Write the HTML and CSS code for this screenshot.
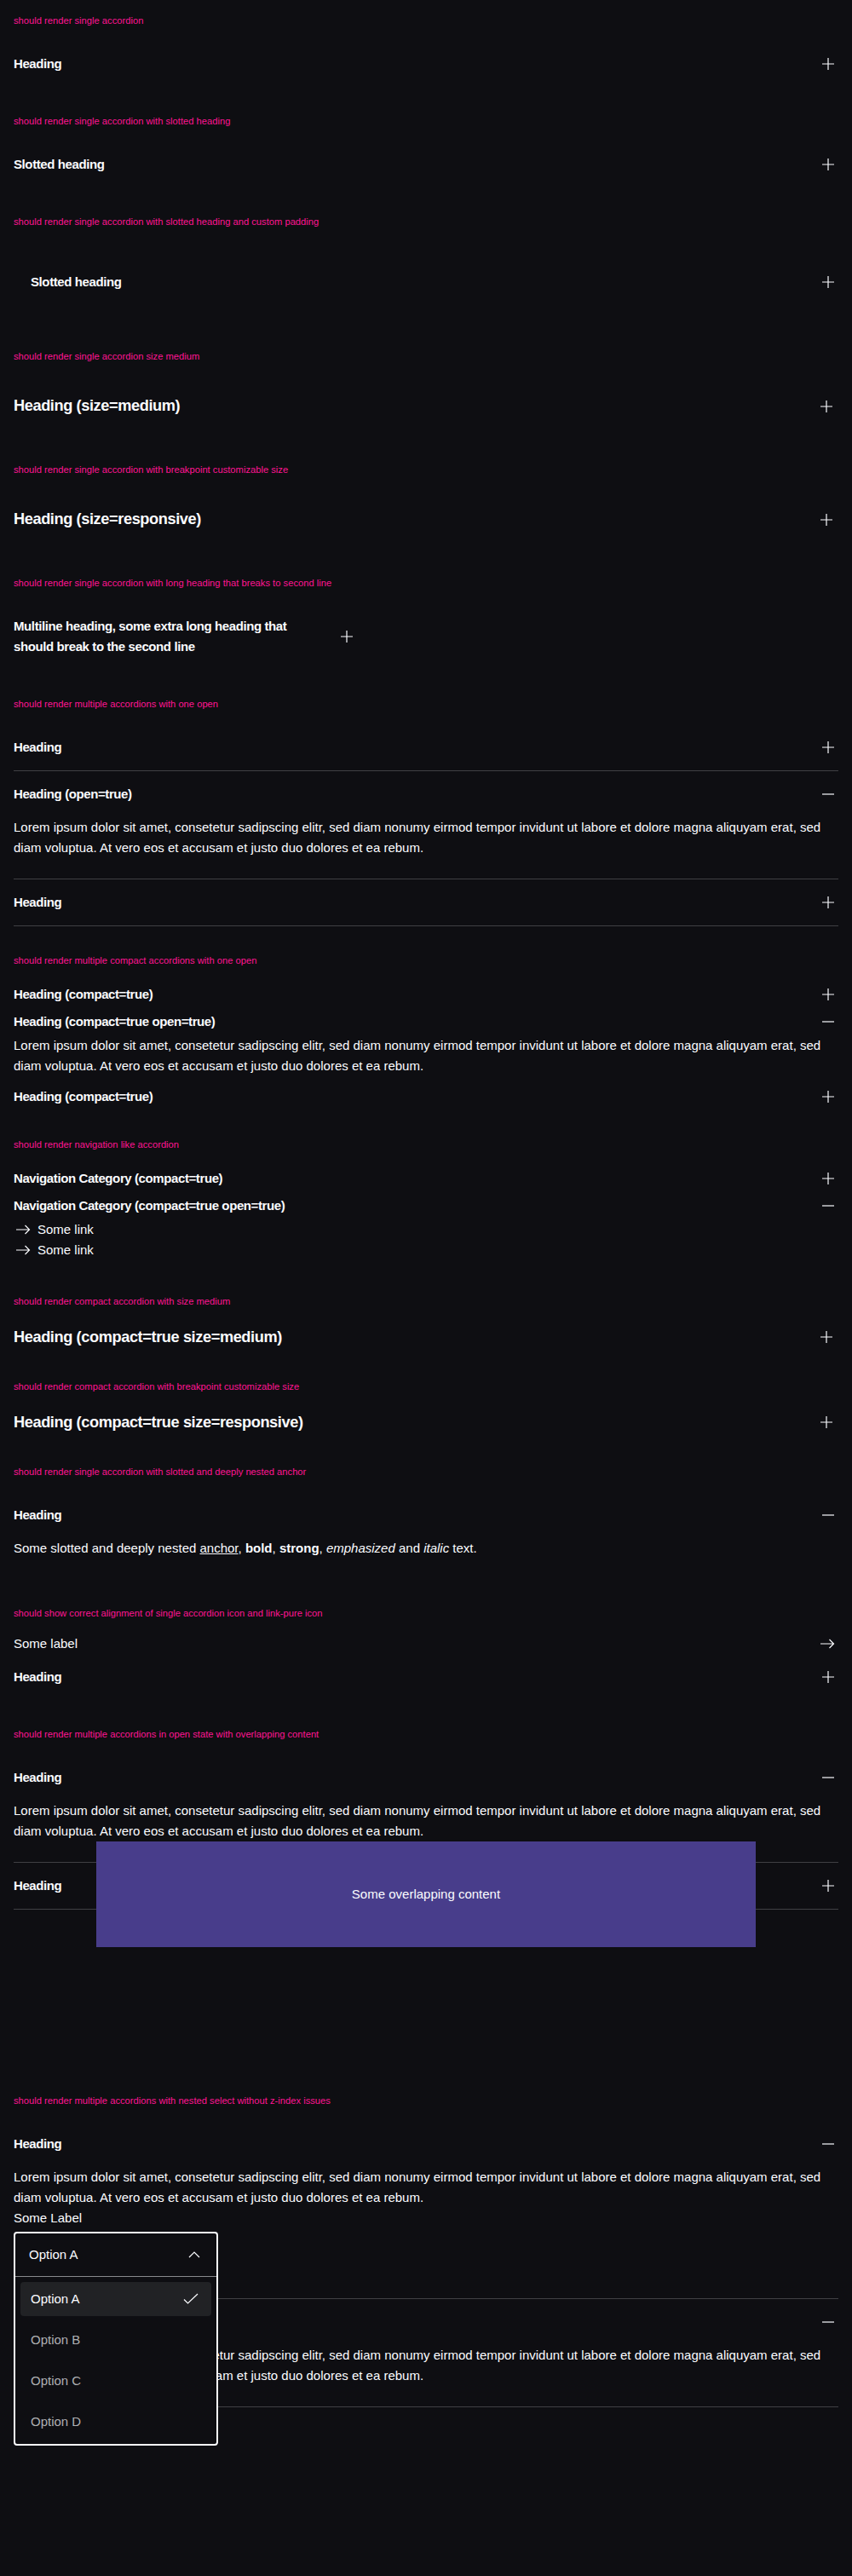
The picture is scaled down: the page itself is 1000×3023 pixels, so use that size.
FILE: index.html
```html
<!DOCTYPE html>
<html lang="en">
<head>
<meta charset="utf-8">
<title>Accordion</title>
<link rel="stylesheet" href="styles.css">
</head>
<body>

<section class="playground">
  <p class="label">should render single accordion</p>
  <div class="acc">
    <div class="acc-head"><h2 class="acc-title">Heading</h2><svg class="ico" viewBox="0 0 24 24" aria-hidden="true"><path d="M12 5v14M5 12h14"/></svg></div>
  </div>
</section>

<section class="playground">
  <p class="label">should render single accordion with slotted heading</p>
  <div class="acc">
    <div class="acc-head"><h2 class="acc-title">Slotted heading</h2><svg class="ico" viewBox="0 0 24 24" aria-hidden="true"><path d="M12 5v14M5 12h14"/></svg></div>
  </div>
</section>

<section class="playground">
  <p class="label">should render single accordion with slotted heading and custom padding</p>
  <div class="acc">
    <div class="acc-head"><h2 class="acc-title padded">Slotted heading</h2><svg class="ico" viewBox="0 0 24 24" aria-hidden="true"><path d="M12 5v14M5 12h14"/></svg></div>
  </div>
</section>

<section class="playground">
  <p class="label">should render single accordion size medium</p>
  <div class="acc medium">
    <div class="acc-head"><h2 class="acc-title">Heading (size=medium)</h2><svg class="ico" viewBox="-2 -2 28 28" aria-hidden="true"><path d="M12 5v14M5 12h14"/></svg></div>
  </div>
</section>

<section class="playground">
  <p class="label">should render single accordion with breakpoint customizable size</p>
  <div class="acc medium">
    <div class="acc-head"><h2 class="acc-title">Heading (size=responsive)</h2><svg class="ico" viewBox="-2 -2 28 28" aria-hidden="true"><path d="M12 5v14M5 12h14"/></svg></div>
  </div>
</section>

<section class="playground">
  <p class="label">should render single accordion with long heading that breaks to second line</p>
  <div class="acc narrow">
    <div class="acc-head"><h2 class="acc-title">Multiline heading, some extra long heading that should break to the second line</h2><svg class="ico" viewBox="0 0 24 24" aria-hidden="true"><path d="M12 5v14M5 12h14"/></svg></div>
  </div>
</section>

<section class="playground">
  <p class="label">should render multiple accordions with one open</p>
  <div class="acc bordered">
    <div class="acc-head"><h2 class="acc-title">Heading</h2><svg class="ico" viewBox="0 0 24 24" aria-hidden="true"><path d="M12 5v14M5 12h14"/></svg></div>
  </div>
  <div class="acc bordered">
    <div class="acc-head"><h2 class="acc-title">Heading (open=true)</h2><svg class="ico" viewBox="0 0 24 24" aria-hidden="true"><path d="M5 12h14"/></svg></div>
    <div class="acc-body"><p>Lorem ipsum dolor sit amet, consetetur sadipscing elitr, sed diam nonumy eirmod tempor invidunt ut labore et dolore magna aliquyam erat, sed diam voluptua. At vero eos et accusam et justo duo dolores et ea rebum.</p></div>
  </div>
  <div class="acc bordered">
    <div class="acc-head"><h2 class="acc-title">Heading</h2><svg class="ico" viewBox="0 0 24 24" aria-hidden="true"><path d="M12 5v14M5 12h14"/></svg></div>
  </div>
</section>

<section class="playground">
  <p class="label">should render multiple compact accordions with one open</p>
  <div class="acc compact">
    <div class="acc-head"><h2 class="acc-title">Heading (compact=true)</h2><svg class="ico" viewBox="0 0 24 24" aria-hidden="true"><path d="M12 5v14M5 12h14"/></svg></div>
  </div>
  <div class="acc compact">
    <div class="acc-head"><h2 class="acc-title">Heading (compact=true open=true)</h2><svg class="ico" viewBox="0 0 24 24" aria-hidden="true"><path d="M5 12h14"/></svg></div>
    <div class="acc-body"><p>Lorem ipsum dolor sit amet, consetetur sadipscing elitr, sed diam nonumy eirmod tempor invidunt ut labore et dolore magna aliquyam erat, sed diam voluptua. At vero eos et accusam et justo duo dolores et ea rebum.</p></div>
  </div>
  <div class="acc compact">
    <div class="acc-head"><h2 class="acc-title">Heading (compact=true)</h2><svg class="ico" viewBox="0 0 24 24" aria-hidden="true"><path d="M12 5v14M5 12h14"/></svg></div>
  </div>
</section>

<section class="playground">
  <p class="label">should render navigation like accordion</p>
  <div class="acc compact">
    <div class="acc-head"><h2 class="acc-title">Navigation Category (compact=true)</h2><svg class="ico" viewBox="0 0 24 24" aria-hidden="true"><path d="M12 5v14M5 12h14"/></svg></div>
  </div>
  <div class="acc compact">
    <div class="acc-head"><h2 class="acc-title">Navigation Category (compact=true open=true)</h2><svg class="ico" viewBox="0 0 24 24" aria-hidden="true"><path d="M5 12h14"/></svg></div>
    <div class="acc-body">
      <a class="link" href="#"><svg class="ico" viewBox="0 0 24 24" aria-hidden="true"><path d="M3 12h15.5M13.5 7l5 5-5 5"/></svg>Some link</a>
      <a class="link" href="#"><svg class="ico" viewBox="0 0 24 24" aria-hidden="true"><path d="M3 12h15.5M13.5 7l5 5-5 5"/></svg>Some link</a>
    </div>
  </div>
</section>

<section class="playground">
  <p class="label">should render compact accordion with size medium</p>
  <div class="acc compact medium">
    <div class="acc-head"><h2 class="acc-title">Heading (compact=true size=medium)</h2><svg class="ico" viewBox="-2 -2 28 28" aria-hidden="true"><path d="M12 5v14M5 12h14"/></svg></div>
  </div>
</section>

<section class="playground">
  <p class="label">should render compact accordion with breakpoint customizable size</p>
  <div class="acc compact medium">
    <div class="acc-head"><h2 class="acc-title">Heading (compact=true size=responsive)</h2><svg class="ico" viewBox="-2 -2 28 28" aria-hidden="true"><path d="M12 5v14M5 12h14"/></svg></div>
  </div>
</section>

<section class="playground">
  <p class="label">should render single accordion with slotted and deeply nested anchor</p>
  <div class="acc">
    <div class="acc-head"><h2 class="acc-title">Heading</h2><svg class="ico" viewBox="0 0 24 24" aria-hidden="true"><path d="M5 12h14"/></svg></div>
    <div class="acc-body"><p>Some slotted and deeply nested <a class="anchor" href="#">anchor</a>, <b>bold</b>, <strong>strong</strong>, <em>emphasized</em> and <i>italic</i> text.</p></div>
  </div>
</section>

<section class="playground">
  <p class="label">should show correct alignment of single accordion icon and link-pure icon</p>
  <a class="link stretch" href="#">Some label<svg class="ico" viewBox="0 0 24 24" aria-hidden="true"><path d="M3 12h15.5M13.5 7l5 5-5 5"/></svg></a>
  <div class="acc">
    <div class="acc-head"><h2 class="acc-title">Heading</h2><svg class="ico" viewBox="0 0 24 24" aria-hidden="true"><path d="M12 5v14M5 12h14"/></svg></div>
  </div>
</section>

<section class="playground">
  <p class="label">should render multiple accordions in open state with overlapping content</p>
  <div class="overlap-wrap">
    <div class="acc bordered">
      <div class="acc-head"><h2 class="acc-title">Heading</h2><svg class="ico" viewBox="0 0 24 24" aria-hidden="true"><path d="M5 12h14"/></svg></div>
      <div class="acc-body"><p>Lorem ipsum dolor sit amet, consetetur sadipscing elitr, sed diam nonumy eirmod tempor invidunt ut labore et dolore magna aliquyam erat, sed diam voluptua. At vero eos et accusam et justo duo dolores et ea rebum.</p></div>
    </div>
    <div class="acc bordered">
      <div class="acc-head"><h2 class="acc-title">Heading</h2><svg class="ico" viewBox="0 0 24 24" aria-hidden="true"><path d="M12 5v14M5 12h14"/></svg></div>
    </div>
    <div class="overlap-box">Some overlapping content</div>
  </div>
</section>

<section class="playground">
  <p class="label">should render multiple accordions with nested select without z-index issues</p>
  <div class="acc bordered">
    <div class="acc-head"><h2 class="acc-title">Heading</h2><svg class="ico" viewBox="0 0 24 24" aria-hidden="true"><path d="M5 12h14"/></svg></div>
    <div class="acc-body">
      <p>Lorem ipsum dolor sit amet, consetetur sadipscing elitr, sed diam nonumy eirmod tempor invidunt ut labore et dolore magna aliquyam erat, sed diam voluptua. At vero eos et accusam et justo duo dolores et ea rebum.</p>
      <span class="select-label">Some Label</span>
      <div class="select">
        <div class="select-pop">
          <div class="select-field"><span>Option A</span><svg class="ico" viewBox="0 0 24 24" aria-hidden="true"><path d="M6 15l6-6 6 6"/></svg></div>
          <div class="select-list" role="listbox">
            <div class="opt selected" role="option"><span>Option A</span><svg class="ico" viewBox="0 0 24 24" aria-hidden="true"><path d="M4 12.5l4.5 4.5L20 6"/></svg></div>
            <div class="opt" role="option"><span>Option B</span></div>
            <div class="opt" role="option"><span>Option C</span></div>
            <div class="opt" role="option"><span>Option D</span></div>
          </div>
        </div>
      </div>
    </div>
  </div>
  <div class="acc bordered">
    <div class="acc-head"><h2 class="acc-title">Heading</h2><svg class="ico" viewBox="0 0 24 24" aria-hidden="true"><path d="M5 12h14"/></svg></div>
    <div class="acc-body"><p>Lorem ipsum dolor sit amet, consetetur sadipscing elitr, sed diam nonumy eirmod tempor invidunt ut labore et dolore magna aliquyam erat, sed diam voluptua. At vero eos et accusam et justo duo dolores et ea rebum.</p></div>
  </div>
</section>

</body>
</html>
```

FILE: styles.css
```css
* {
  box-sizing: border-box;
}

html,
body {
  margin: 0;
  padding: 0;
}

body {
  min-height: 3023px;
  background: #0e0e12;
  color: #fbfcff;
  font-family: "Liberation Sans", Arial, sans-serif;
  font-size: 15px;
  line-height: 24px;
}

.playground {
  padding: 16px;
}

.label {
  margin: 0 0 16px;
  font-size: 11.2px;
  line-height: 16px;
  color: #ff1493;
}

/* accordion */
.acc-head {
  display: flex;
  align-items: center;
  justify-content: space-between;
  gap: 24px;
  padding: 15px 0;
}

.acc-title {
  margin: 0;
  font-size: 15px;
  line-height: 24px;
  font-weight: 700;
  letter-spacing: -0.4px;
}

.acc-title.padded {
  padding: 20px;
}

.acc.bordered {
  border-bottom: 1px solid #404044;
}

.acc-body {
  padding-bottom: 24px;
}

.acc-body p {
  margin: 0;
}

.acc.compact .acc-head {
  padding: 4px 0;
}

.acc.compact .acc-body {
  padding-bottom: 8px;
}

.acc.medium .acc-head {
  padding: 20.5px 0;
}

.acc.compact.medium .acc-head {
  padding: 4px 0;
}

.acc.medium .acc-title {
  font-size: 18.2px;
  line-height: 27px;
}

.acc.medium .ico {
  width: 28px;
  height: 28px;
}

.acc.narrow {
  width: 403px;
}

/* icons */
.ico {
  display: block;
  flex: none;
  width: 24px;
  height: 24px;
  color: #fbfcff;
}

.ico path {
  fill: none;
  stroke: currentColor;
  stroke-width: 1.2;
}

/* link pure */
.link {
  display: flex;
  align-items: center;
  gap: 4px;
  height: 24px;
  color: #fbfcff;
  text-decoration: none;
  line-height: 24px;
}

.link.stretch {
  justify-content: space-between;
}

.anchor {
  color: inherit;
  text-decoration: underline;
}

/* overlap */
.overlap-wrap {
  position: relative;
  min-height: 366px;
}

.overlap-box {
  position: absolute;
  top: 102px;
  left: 10%;
  width: 80%;
  height: 124px;
  display: flex;
  align-items: center;
  justify-content: center;
  background: #483d8b;
  color: #fbfcff;
}

/* select */
.select-label {
  display: block;
  line-height: 24px;
  margin-bottom: 4px;
}

.select {
  position: relative;
  width: 240px;
  height: 54px;
}

.select-pop {
  position: absolute;
  top: 0;
  left: 0;
  width: 240px;
  z-index: 2;
  border: 2px solid #fbfcff;
  border-radius: 4px;
  background: #0e0e12;
}

.select-field {
  display: flex;
  align-items: center;
  justify-content: space-between;
  height: 51px;
  padding: 0 14px 0 16px;
  border-bottom: 1px solid #88898c;
}

.select-list {
  display: flex;
  flex-direction: column;
  gap: 8px;
  padding: 6px;
}

.opt {
  display: flex;
  align-items: center;
  justify-content: space-between;
  height: 40px;
  padding: 0 12px;
  border-radius: 4px;
  color: #afb0b3;
}

.opt.selected {
  background: #212225;
  color: #fbfcff;
}
```
